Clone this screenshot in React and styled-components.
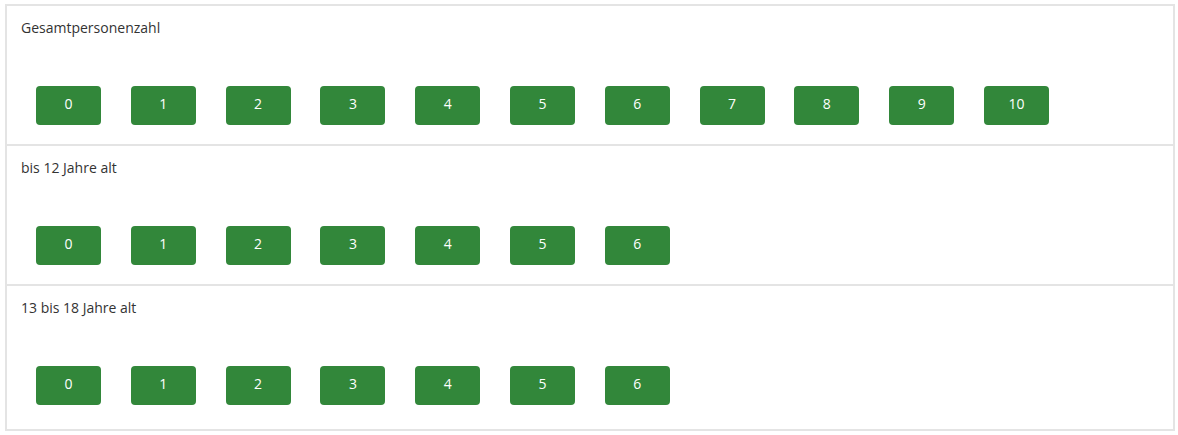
import React from 'react'
import styled, { createGlobalStyle } from 'styled-components'

const GlobalStyle = createGlobalStyle`
    html, body {
        margin: 0;
        padding: 0;
        background: #ffffff;
    }
    body {
        font-family: "Open Sans", "Noto Sans", Arial, sans-serif;
    }
`

const Page = styled.div`
    padding: 4px 3px 0 5px;
`

const Panel = styled.div`
    border: 2px solid #e4e4e4;
    background: #fff;
    padding-bottom: 5px;
`

const Section = styled.div`
    padding: 12px 15px 19px 14px;
    & + & {
        border-top: 2px solid #e4e4e4;
    }
`

const Label = styled.div`
    font-size: 14px;
    line-height: 20px;
    color: #333;
`

const Row = styled.div`
    display: flex;
    gap: 29.8px;
    margin-top: 48px;
    padding-left: 15px;
`

const CountButton = styled.button`
    width: 65px;
    height: 39px;
    border: none;
    border-radius: 4px;
    background-color: #32873a;
    color: #fff;
    font-family: "Open Sans", "Noto Sans", Arial, sans-serif;
    font-size: 14px;
    font-weight: 400;
    line-height: 20px;
    padding: 0 0 3px;
    cursor: pointer;
`

const groups = [
    { label: 'Gesamtpersonenzahl', max: 10 },
    { label: 'bis 12 Jahre alt', max: 6 },
    { label: '13 bis 18 Jahre alt', max: 6 },
]

const App = () => {
    return (
        <Page>
            <GlobalStyle />
            <Panel>
                {groups.map((g) => (
                    <Section key={g.label}>
                        <Label>{g.label}</Label>
                        <Row>
                            {Array.from({ length: g.max + 1 }, (_, i) => (
                                <CountButton key={i}>{i}</CountButton>
                            ))}
                        </Row>
                    </Section>
                ))}
            </Panel>
        </Page>
    )
}

export default App
